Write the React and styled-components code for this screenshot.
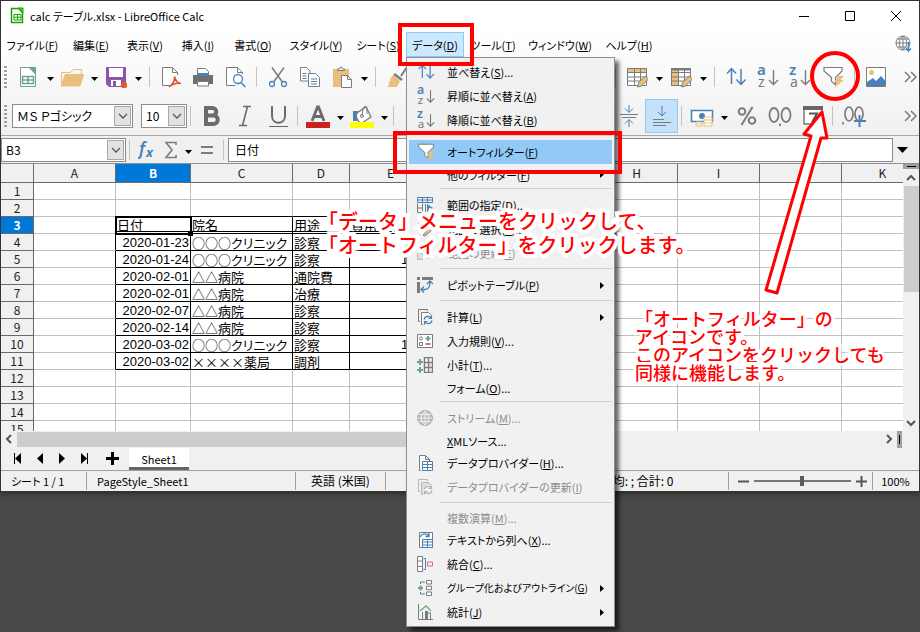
import React, { useState } from "react";
import styled, { createGlobalStyle } from "styled-components";

const GlobalStyle = createGlobalStyle`
  * {
    box-sizing: border-box;
  }
  body {
    margin: 0;
    background: #484847;
    color: #000;
    font-family: "Noto Sans CJK JP", "Noto Sans", sans-serif;
    font-size: 11px;
    line-height: 16px;
    font-feature-settings: "palt";
  }
  button, input, select {
    font: inherit;
    font-feature-settings: inherit;
    color: inherit;
    margin: 0;
    padding: 0;
    border: none;
    background: none;
  }
`;

const Page = styled.div`
  position: relative;
  min-height: 100vh;
  overflow: hidden;
`;

const Window = styled.div`
  display: flex;
  flex-direction: column;
  border: 1px solid #333;
  background: #f0f0f0;
  box-shadow: 0 1px 6px rgba(0, 0, 0, 0.5);
`;

const TitleBar = styled.header`
  display: flex;
  align-items: center;
  height: 31px;
  padding: 0 0 2px 9px;
  gap: 6px;
  background: #fff;
`;

const Title = styled.h1`
  flex: 1;
  margin: 0;
  font-size: 11px;
  font-weight: 400;
`;

const CaptionGroup = styled.div`
  display: flex;
`;

const CaptionButton = styled.button`
  display: flex;
  align-items: center;
  justify-content: center;
  width: 46px;
  height: 29px;
`;

const Chrome = styled.div`
  border-bottom: 1px solid #a8a8ac;
  background: linear-gradient(#fff, #f0f0f0);
`;

const MenuBar = styled.nav`
  display: flex;
  align-items: stretch;
  height: 25px;
`;

const MenuSlot = styled.div`
  position: relative;
  display: flex;
  width: ${(props) => props.$width}px;
`;

const MenuButton = styled.button`
  flex: 1;
  white-space: nowrap;
  border: 1px solid ${(props) => (props.$open ? "#90c8f6" : "transparent")};
  background: ${(props) => (props.$open ? "#cce8ff" : "transparent")};
`;

const UpdateButton = styled.button`
  margin-left: auto;
  padding-right: 7px;
`;

const Dropdown = styled.div`
  position: absolute;
  z-index: 5;
  top: 25px;
  left: 0;
  width: 209px;
  padding: 2px;
  border: 1px solid #8f8f8f;
  background: #f1f1f1;
  box-shadow: 4px 4px 4px rgba(0, 0, 0, 0.6);
`;

const Entry = styled.button`
  display: flex;
  align-items: center;
  width: 100%;
  height: ${(props) => (props.$icon ? 24 : 21)}px;
  padding: 0 8px;
  text-align: left;
  white-space: nowrap;
  font-size: ${(props) => (props.$small ? 10 : 11)}px;
  color: ${(props) => (props.disabled ? "#8d8d8d" : "#000")};
  background: ${(props) => (props.$active ? "#91c9f7" : "transparent")};
`;

const EntryIcon = styled.span`
  display: flex;
  flex: none;
  width: 30px;
`;

const EntryText = styled.span`
  flex: 1;
`;

const Rule = styled.hr`
  height: 1px;
  margin: 3px 0 4px 31px;
  border: none;
  background: #d2d2d2;
`;

const Toolbar = styled.div`
  display: flex;
  align-items: center;
  height: ${(props) => props.$height}px;
`;

const Grip = styled.span`
  width: 3px;
  height: 22px;
  margin: 0 5px 0 3px;
  background: repeating-linear-gradient(#a0a0a0 0 2px, transparent 2px 4px);
`;

const ToolButton = styled.button`
  display: flex;
  flex: none;
  align-items: center;
  justify-content: center;
  width: ${(props) => (props.$wide ? 33 : 32)}px;
  height: 34px;
  border: 1px solid ${(props) => (props.$pressed ? "#90c8f6" : "transparent")};
  background: ${(props) => (props.$pressed ? "#c4e1f9" : "transparent")};
`;

const ArrowButton = styled.button`
  display: flex;
  flex: none;
  align-items: center;
  justify-content: center;
  width: 12px;
  height: 34px;
  padding-top: 4px;
`;

const Divider = styled.span`
  flex: none;
  width: 1px;
  height: 20px;
  margin: 0 ${(props) => (props.$tight ? "4px 0 3px" : "5px")};
  background: #c3c3c3;
`;

const Gap = styled.span`
  flex: none;
  width: ${(props) => props.$width}px;
`;

const MoreButton = styled.button`
  margin-left: auto;
  padding: 0 1px;
  display: flex;
`;

const Combo = styled.label`
  display: flex;
  flex: none;
  align-items: stretch;
  width: ${(props) => props.$width}px;
  height: 24px;
  margin-right: ${(props) => props.$after || 0}px;
  border: 1px solid #8c8c8c;
  background: #fff;
  input {
    flex: 1;
    min-width: 0;
    padding-left: 4px;
    font-size: 12px;
  }
  button {
    display: flex;
    align-items: center;
    justify-content: center;
    width: 17px;
    margin: 1px;
    border: 1px solid #a8a8a8;
    background: #e2e2e2;
  }
`;

const FormulaBar = styled.div`
  display: flex;
  align-items: center;
  height: 27px;
`;

const FormulaButton = styled(ToolButton)`
  width: 26px;
  height: 25px;
`;

const FormulaInput = styled.input`
  flex: 1;
  height: 24px;
  padding-left: 6px;
  font-size: 12px;
  border: 1px solid #8c8c8c;
  background: #fff;
`;

const ExpandButton = styled(FormulaButton)`
  padding-right: 8px;
`;

const SheetArea = styled.div`
  display: flex;
  height: 268px;
  border-top: 1px solid #8f8f8f;
`;

const Viewport = styled.div`
  flex: 1;
  overflow: hidden;
  background: #fff;
`;

const Grid = styled.table`
  table-layout: fixed;
  width: 890px;
  border-collapse: separate;
  border-spacing: 0;
`;

const Col = styled.col`
  width: ${(props) => props.$width}px;
`;

const ColHead = styled.th`
  height: 19px;
  padding: 0;
  font-size: 12px;
  line-height: 16px;
  font-weight: ${(props) => (props.$current ? 700 : 400)};
  color: ${(props) => (props.$current ? "#fff" : "#222")};
  background: ${(props) => (props.$current ? "#0078d7" : "#f0f0f0")};
  border-right: 1px solid #6a6a6a;
  border-bottom: 1px solid #6a6a6a;
`;

const RowHead = styled(ColHead)`
  height: 17px;
`;

const Cell = styled.td`
  position: relative;
  height: 17px;
  padding: 1px 1px 0;
  overflow: ${(props) => (props.$selected ? "visible" : "hidden")};
  white-space: nowrap;
  font-family: ${(props) => (props.$number ? '"Liberation Sans", ' : "")}
    "Noto Sans CJK JP", sans-serif;
  font-size: 13px;
  line-height: ${(props) => (props.$double ? 13 : 15)}px;
  text-align: ${(props) => (props.$number ? "right" : "left")};
  border-right: 1px solid ${(props) => (props.$boxRight ? "#000" : "#c0c0c0")};
  border-bottom: ${(props) =>
    props.$double
      ? "3px double #000"
      : `1px solid ${props.$boxBottom ? "#000" : "#c0c0c0"}`};
  outline: ${(props) => (props.$selected ? "2px solid #000" : "none")};
  outline-offset: -1px;
  z-index: ${(props) => (props.$selected ? 1 : "auto")};
`;

const FillHandle = styled.span`
  position: absolute;
  right: -3px;
  bottom: -5px;
  width: 5px;
  height: 5px;
  background: #000;
`;

const VScroll = styled.div`
  display: flex;
  flex-direction: column;
  align-items: center;
  width: 16px;
  background: #f0f0f0;
`;

const SplitHandle = styled.span`
  flex: none;
  display: flex;
  align-items: center;
  justify-content: center;
  width: ${(props) => (props.$vertical ? 5 : 16)}px;
  height: ${(props) => (props.$vertical ? 17 : 5)}px;
  background: #a0a0a0;
  &::after {
    content: "";
    width: ${(props) => (props.$vertical ? 1 : 9)}px;
    height: ${(props) => (props.$vertical ? 9 : 1)}px;
    background: #000;
  }
`;

const ScrollButton = styled.button`
  display: flex;
  flex: none;
  align-items: center;
  justify-content: center;
  width: 16px;
  height: 17px;
`;

const VThumb = styled.div`
  width: 15px;
  height: 106px;
  margin-bottom: auto;
  background: #cdcdcd;
`;

const HScroll = styled.div`
  display: flex;
  align-items: center;
  height: 16px;
  padding-right: 17px;
`;

const HThumb = styled.div`
  width: 52%;
  height: 15px;
  margin-right: auto;
  background: #cdcdcd;
`;

const TabBar = styled.div`
  display: flex;
  align-items: center;
  height: 23px;
  padding-left: 6px;
`;

const NavButton = styled.button`
  display: flex;
  align-items: center;
  justify-content: center;
  width: 22px;
  height: 22px;
`;

const AddButton = styled(NavButton)`
  width: 34px;
`;

const SheetTab = styled.button`
  width: 60px;
  height: 22px;
  padding-top: 3px;
  background: #fff;
  border-bottom: 3px solid #666;
`;

const StatusBar = styled.footer`
  display: flex;
  align-items: center;
  height: 21px;
  border-top: 1px solid #a0a0a0;
`;

const StatusCell = styled.div`
  flex: ${(props) => (props.$width ? "none" : 1)};
  width: ${(props) => props.$width}px;
  height: 18px;
  padding: 1px ${(props) => (props.$center ? 0 : 10)}px;
  font-size: ${(props) => (props.$large ? 12 : 11)}px;
  text-align: ${(props) => (props.$center ? "center" : "left")};
  white-space: nowrap;
  border-right: 1px solid ${(props) => (props.$last ? "transparent" : "#a0a0a0")};
`;

const ZoomGroup = styled.div`
  display: flex;
  align-items: center;
  width: 144px;
  height: 18px;
  padding: 0 5px 0 9px;
  gap: 5px;
  border-right: 1px solid #a0a0a0;
  button {
    display: flex;
  }
`;

const ZoomSlider = styled.input`
  flex: 1;
  min-width: 0;
  appearance: none;
  height: 12px;
  background: linear-gradient(#777, #777) center / 100% 2px no-repeat;
  &::-webkit-slider-thumb {
    appearance: none;
    width: 4px;
    height: 10px;
    background: #5c5c5c;
  }
`;

const RedBox = styled.div`
  position: absolute;
  z-index: 6;
  left: ${(props) => props.$left}px;
  top: ${(props) => props.$top}px;
  width: ${(props) => props.$width}px;
  height: 43px;
  border: 4px solid #f00;
  pointer-events: none;
`;

const RedArrow = styled.svg`
  position: absolute;
  z-index: 6;
  left: 750px;
  top: 48px;
  pointer-events: none;
`;

const Note = styled.p`
  position: absolute;
  z-index: 7;
  left: ${(props) => props.$left}px;
  top: ${(props) => props.$top}px;
  margin: 0;
  color: #f00;
  font-size: ${(props) => props.$size}px;
  line-height: ${(props) => props.$line}px;
  font-weight: 500;
  font-feature-settings: normal;
  white-space: nowrap;
  -webkit-text-stroke: ${(props) => props.$halo}px #fff;
  paint-order: stroke fill;
  pointer-events: none;
`;

const GRAY = "#7b7b7b";
const BLUE = "#4a80b8";
const SAND = "#e9bf7e";
const GREEN = "#6fa58d";

function Icon({ size = 22, width, height, children, ...rest }) {
  return (
    <svg
      width={width || size}
      height={height || size}
      viewBox={`0 0 ${width || size} ${height || size}`}
      fill="none"
      stroke={GRAY}
      aria-hidden="true"
      {...rest}
    >
      {children}
    </svg>
  );
}

const Triangle = () => (
  <Icon width={7} height={4} stroke="none">
    <path d="M0 0h7L3.500 4z" fill="#000" />
  </Icon>
);

const Chevron = ({ turn = 0, color = "#555", weight = 1.3 }) => (
  <Icon width={10} height={10} stroke={color} strokeWidth={weight}>
    <path d="M1 3l4 4 4-4" transform={`rotate(${turn} 5 5)`} />
  </Icon>
);

const MoreIcon = () => (
  <Icon width={14} height={12} strokeWidth="1.500">
    <path d="M1 1l5 5-5 5M7 1l5 5-5 5" />
  </Icon>
);

const CalcLogo = () => (
  <Icon width={14} height={17} stroke="#18a303">
    <path d="M1.500 1.500h7l4 4v10h-11z" fill="#fff" strokeWidth="1.500" />
    <path d="M8 1h5v5z" fill="#43c330" />
    <path d="M4 7.500h7v5.500H4zM4 10.200h7M7.500 7.500V13" />
  </Icon>
);

const NewIcon = () => (
  <Icon stroke={GREEN}>
    <path d="M3.500 1.500h9l6 6v13h-15z" fill="#fff" />
    <path d="M11 1h8v8z" fill={GREEN} stroke="none" />
    <path d="M5.500 10.500h11v7h-11zM5.500 14h11M11 10.500v7" strokeWidth="1.500" />
  </Icon>
);

const FolderIcon = () => (
  <Icon width={24} stroke={SAND}>
    <path d="M1.500 19V6.500h9l3-3h8V8" fill="#fdf6ea" />
    <path d="M5 8.500h18.500L20 20H1.500z" fill={SAND} />
  </Icon>
);

const SaveIcon = () => (
  <Icon stroke="none">
    <path d="M1 1h20v20H4l-3-3z" fill="#8e56ab" />
    <path d="M4 2h14v9H4z" fill="#fff" />
    <path d="M6 14h10v6H6z" fill="#fff" />
    <path d="M8 15h3v5H8z" fill="#8e56ab" />
    <circle cx="19" cy="19" r="3.200" fill="#e0592f" />
  </Icon>
);

const PdfIcon = () => (
  <Icon>
    <path d="M17.500 9V6.500l-5-5h-10v18h8" fill="#fff" />
    <path d="M12.500 1.500v5h5" />
    <path
      d="M9 21c4-3 6-7 5.500-10.500C16 15 17 17 21 17.500c-5-.8-8 0-12 3.500"
      stroke="#d9552f"
      strokeWidth="1.500"
    />
  </Icon>
);

const PrintIcon = () => (
  <Icon>
    <path d="M5.500 8V2.500h8l3 3V8" fill="#fff" />
    <path d="M1 9h20v9H1z" fill="#6f6f6f" stroke="none" />
    <path d="M5 7h12v3H5z" fill={BLUE} stroke="none" />
    <path d="M5.500 15.500h11v4.500h-11z" fill="#fff" />
  </Icon>
);

const PreviewIcon = () => (
  <Icon>
    <path d="M18.500 8V6.500l-5-5h-11v18h9" fill="#fff" />
    <path d="M13.500 1.500v5h5" />
    <circle cx="14" cy="13" r="4.500" stroke={BLUE} strokeWidth="1.300" />
    <path d="M17 16.500l4.500 4.500" stroke={BLUE} strokeWidth="1.500" />
  </Icon>
);

const CutIcon = () => (
  <Icon>
    <path d="M5 1.500l10 14M17 1.500l-10 14" strokeWidth="1.500" />
    <circle cx="5" cy="18" r="2.500" stroke={BLUE} strokeWidth="1.300" />
    <circle cx="17" cy="18" r="2.500" stroke={BLUE} strokeWidth="1.300" />
  </Icon>
);

const CopyIcon = () => (
  <Icon>
    <path d="M1.500 1.500h6l3.500 3.500v10H1.500z" fill="#fff" />
    <path d="M3.500 7.500h4M3.500 10h4M3.500 12.500h4" stroke={BLUE} />
    <path d="M9.500 7.500h7l4 4v9h-11z" fill="#fff" />
    <path d="M12 13h6M12 15.500h6M12 18h6" stroke={BLUE} />
  </Icon>
);

const PasteIcon = () => (
  <Icon>
    <path d="M2 3h16v18H2z" fill={SAND} stroke="none" />
    <path d="M6.500 4.500V3h2l1-2h1l1 2h2v1.500z" fill="#fff" />
    <path d="M10.500 9.500h6l4 4v8h-10z" fill="#fff" />
    <path d="M16.500 9.500v4h4" />
  </Icon>
);

const BrushIcon = () => (
  <Icon>
    <path d="M21 1l-6 9" strokeWidth="2" />
    <path d="M8 8l8 6" strokeWidth="2.500" />
    <path d="M7 9l7 6-3 6H1l3-3-2-1 3-3-1-1z" fill={SAND} stroke="none" />
  </Icon>
);

const TableIcon = ({ columns }) => (
  <Icon>
    <path d="M1.500 2.500h19v17h-19z" fill="#fff" />
    {columns ? (
      <path d="M1.500 2.500h7v17h-7z" fill={SAND} />
    ) : (
      <path d="M1.500 2.500h19v4h-19z" fill={SAND} />
    )}
    <path d="M1.500 6.500h19M1.500 11h19M1.500 15h19M8.500 2.500v17M14.500 2.500v17" />
    {columns && <path d="M1 2h20v2.500H1z" fill={GRAY} stroke="none" />}
    <path d="M11.500 21l1-4.500 7-6.500 3 3-7 7z" fill={SAND} />
  </Icon>
);

const SortIcon = ({ size = 22 }) => (
  <svg
    width={size}
    height={size}
    viewBox="0 0 22 22"
    fill="none"
    stroke={BLUE}
    strokeWidth="1.500"
    aria-hidden="true"
  >
    <path d="M6.500 18V3M2 7.500l4.500-5 4.500 5" />
    <path d="M16 3v15M11.500 13.500l4.500 5 4.500-5" />
  </svg>
);

const LetterSortIcon = ({ top, bottom, size = 22 }) => (
  <svg width={size} height={size} viewBox="0 0 22 22" aria-hidden="true">
    <text x="0" y="9" fontFamily="Noto Sans" fontSize="15" fontWeight="600" fill={BLUE}>
      {top}
    </text>
    <text x="1" y="21" fontFamily="Noto Sans" fontSize="14" fill={GRAY}>
      {bottom}
    </text>
    <path
      d="M16.500 4v14.500M12 14l4.500 4.500 4.500-4.500"
      fill="none"
      stroke={GRAY}
      strokeWidth="1.400"
    />
  </svg>
);

const FilterIcon = ({ size = 22 }) => (
  <svg width={size} height={size} viewBox="0 0 22 22" aria-hidden="true">
    <path
      d="M2 1.500h18v3.500l-6.500 6.500v7l-4-3v-4L2 5z"
      fill="#fff"
      stroke={GRAY}
      strokeWidth="1.200"
    />
    <path d="M17 10h5l-3.500 4H22l-10 8 3-6h-3z" fill={SAND} />
  </svg>
);

const ImageIcon = () => (
  <Icon>
    <path d="M1.500 1.500h19v19h-19z" fill="#fff" />
    <circle cx="6.500" cy="6.500" r="2.500" fill={SAND} stroke="none" />
    <path d="M2 20v-4l6-4 3 3 5-5 4.500 5v5z" fill={BLUE} stroke="none" />
  </Icon>
);

const BoldIcon = () => (
  <Icon strokeWidth="4" stroke="#6b6b6b">
    <path d="M5 3h6.500a3.700 3.700 0 010 7.500H5zM5 10.500h7.500a4.200 4.200 0 010 8.500H5z" />
  </Icon>
);

const ItalicIcon = () => (
  <Icon strokeWidth="1.600" stroke="#6b6b6b">
    <path d="M9 1.500h8M5 20.500h8M13.500 1.500l-5 19" />
  </Icon>
);

const UnderlineIcon = () => (
  <Icon stroke="#6b6b6b">
    <path d="M5 1v10c0 9 13 9 13 0V1" strokeWidth="2" />
    <path d="M2 21.500h19" />
  </Icon>
);

const FontColorIcon = () => (
  <Icon width={24} height={24} stroke="#6b6b6b">
    <path d="M6 17l5.500-14h1L18 17M8 12.500h8" strokeWidth="2.800" />
    <path d="M0 18h24v6H0z" fill="#c9211e" stroke="none" />
  </Icon>
);

const FillColorIcon = () => (
  <Icon width={24} height={24}>
    <path d="M3 7h6l-2 4v6H3z" fill={BLUE} stroke="none" />
    <path d="M7 9l9-6 5 10-9 6c-3 1-7-6-5-10z" fill="#fff" strokeWidth="1.300" />
    <path d="M12 12l1-7c1-4 4-3 4 0v5" />
    <circle cx="12" cy="12" r="1.500" />
    <path d="M0 18h24v6H0z" fill="#ff0" stroke="none" />
  </Icon>
);

const AlignMiddleIcon = () => (
  <Icon>
    <path d="M2 9.500h18M4 12.500h14" />
    <path d="M11 0v7M7 3.500l4 4 4-4M11 22v-7M7 18.500l4-4 4 4" stroke={BLUE} />
  </Icon>
);

const AlignBottomIcon = () => (
  <Icon>
    <path d="M11 1v10M7 7l4 4 4-4" stroke={BLUE} />
    <path d="M2 14.500h11M2 17.500h18M2 20.500h13" strokeWidth="1.200" />
  </Icon>
);

const CurrencyIcon = () => (
  <Icon width={24}>
    <path d="M1.500 5.500h21v11h-21z" fill="#fff" stroke={BLUE} strokeWidth="1.500" />
    <circle cx="12" cy="11" r="3" fill={BLUE} stroke="none" />
    <g fill="#fff" stroke={SAND}>
      <path d="M6 17h6v4H6zM6 19h6M14 12h8v9h-8zM14 15h8M14 18h8" />
    </g>
  </Icon>
);

const PercentIcon = () => (
  <Icon strokeWidth="2">
    <circle cx="6" cy="6.500" r="3.300" />
    <circle cx="16" cy="15.500" r="3.300" />
    <path d="M16.500 2l-11 18" />
  </Icon>
);

const DecimalIcon = () => (
  <Icon width={24} strokeWidth="1.800">
    <ellipse cx="6" cy="10" rx="4.500" ry="7" />
    <ellipse cx="18" cy="10" rx="4.500" ry="7" />
    <path d="M12 18.500v2.500" />
  </Icon>
);

const DateIcon = () => (
  <Icon>
    <path d="M2 2h18v17H2z" fill="#fff" strokeWidth="1.500" />
    <path d="M1 1h20v4H1z" fill="#666" stroke="none" />
    <path d="M7 8.500h8l-5 9" stroke="#555" strokeWidth="2" />
  </Icon>
);

const AddDecimalIcon = () => (
  <Icon width={24} strokeWidth="1.700">
    <ellipse cx="7" cy="9" rx="4" ry="7" />
    <ellipse cx="17" cy="9" rx="4" ry="7" />
    <path d="M1 17v2.500" />
    <path d="M17.500 10v12M12 16h12" stroke={BLUE} strokeWidth="2" />
  </Icon>
);

const UpdateIcon = () => (
  <Icon size={17}>
    <circle cx="8" cy="8" r="7" />
    <path d="M1 8h14M2.500 4h11M2.500 12h9M8 1v14M8 1c-5 4-5 10 0 14M8 1c5 4 5 10 0 14" />
    <path d="M13.500 7v9M11 13.500l2.500 2.500 2.500-2.500" stroke={BLUE} strokeWidth="1.500" />
  </Icon>
);

const FxIcon = () => (
  <Icon width={18} height={20} stroke="none" fill={BLUE}>
    <text x="1" y="15" fontFamily="Noto Sans" fontStyle="italic" fontWeight="600" fontSize="17">
      f
    </text>
    <text x="8" y="17" fontFamily="Noto Sans" fontStyle="italic" fontWeight="700" fontSize="13">
      x
    </text>
  </Icon>
);

const SigmaIcon = () => (
  <Icon width={14} height={18} strokeWidth="1.600">
    <path d="M12 4V1.500H2L8 9l-6 7.500h10V14" />
  </Icon>
);

const EqualIcon = () => (
  <Icon width={14} height={10} strokeWidth="2">
    <path d="M1 2h12M1 8h12" />
  </Icon>
);

/* 16px icons of the data menu */
const RangeIcon = () => (
  <Icon size={16}>
    <path d="M.5 6.500v9h5v-9M.5 11h5" />
    <path d="M.5.5h15v5H.5zM5.500.5v5M10.500.5v5M.5 3h15" stroke={BLUE} />
    <path d="M10 7l6 4-6 4z" fill={BLUE} stroke="none" />
    <path d="M8.500 7v9" />
  </Icon>
);

const SelectRangeIcon = () => (
  <Icon size={16}>
    <path d="M1 2h4v3H1z" fill={SAND} stroke="none" />
    <path d="M6 14l8-8 2 2-8 7z" fill={SAND} />
  </Icon>
);

const RefreshRangeIcon = () => (
  <Icon size={16} stroke="#bbb">
    <path d="M.5.500h9v4h-9zM.5 8.500h5v6h-5z" fill="#ddd" />
    <circle cx="11" cy="10" r="3.500" />
  </Icon>
);

const PivotIcon = () => (
  <Icon size={16}>
    <path d="M0 0h3v3H0zM5 0h11v3H5zM0 5h3v11H0z" fill={GRAY} stroke="none" />
    <path
      d="M4 12.500h4c4 0 5-3 5-8M7 9.500l-3 3 3 3M10 7l3-3 3 3"
      stroke={BLUE}
      strokeWidth="1.300"
    />
  </Icon>
);

const RecalcIcon = ({ muted }) => (
  <Icon size={16} stroke={muted ? "#b4b4b4" : GRAY}>
    <path d="M3 12.500H1.500V.5h9V2" />
    <path d="M6 15.500H4.500v-12h7l3 3" fill={muted ? "#dcdcdc" : "#fff"} />
    <circle cx="11" cy="11" r="5" fill="#f1f1f1" stroke="none" />
    <path
      d="M7 10.500c1-4 6-4 7.500-1M14.500 6.500v3h-3M15 11.500c-1 4-6 4-7.500 1M7.500 15.500v-3h3"
      stroke={muted ? "#b4b4b4" : BLUE}
      strokeWidth="1.200"
    />
  </Icon>
);

const ValidityIcon = () => (
  <Icon size={16}>
    <path d="M.5 1.500h15v13H.5z" fill="#fff" />
    <circle cx="4" cy="5.500" r="1.500" />
    <path d="M2.500 9.500h3v3h-3z" />
    <path d="M11 3v5M8.500 5.500h5" stroke={GREEN} strokeWidth="2" />
    <path d="M8.500 11h5" stroke="#db6b80" strokeWidth="2" />
  </Icon>
);

const SubtotalIcon = () => (
  <Icon size={16}>
    <path
      d="M7.500.5h8v15h-8zM7.500 5.500h8M7.500 10.500h8M11.500.5v15"
      fill="#fff"
      strokeWidth="1.500"
    />
    <path d="M3 2v6M0 5h6M3 10v6M0 13h6" stroke={GREEN} strokeWidth="2" />
    <path d="M13 8h1M13 13h1" stroke="#db6b80" />
  </Icon>
);

const GlobeIcon = () => (
  <Icon size={16} stroke="#f1f1f1">
    <circle cx="8" cy="8" r="7.500" fill="#b9b9b9" stroke="#b0b0b0" />
    <path d="M1 8h14M2 4.500h12M2 11.500h12M8 1v14M8 1c-5 4-5 10 0 14M8 1c5 4 5 10 0 14" />
  </Icon>
);

const ProviderIcon = () => (
  <Icon size={16}>
    <path d="M4 15.500H2.500V.5h6l4 4V6M8.500.5v4h4" fill="#fff" />
    <path
      d="M5.500 6.500h10v9h-10zM5.500 9.500h10M5.500 12.500h10M10.500 6.500v9"
      stroke={BLUE}
      fill="#fff"
    />
  </Icon>
);

const TextToColumnsIcon = () => (
  <Icon size={16}>
    <path d="M2.500.5h13v15h-13z" fill="#fff" />
    <path d="M3 5c2-4 6-4 9-1M12 1v3.500H8.500" stroke={BLUE} strokeWidth="1.300" />
    <path d="M5.500 7.500h10v8h-10zM5.500 10h10M5.500 13h10M10.500 7.500v8" stroke={BLUE} />
  </Icon>
);

const ConsolidateIcon = () => (
  <Icon size={16}>
    <path d="M.5.5h5v15h-5zM.5 5h5M.5 10.500h5" fill="#fff" />
    <path d="M6.500 2.500h2v11h-2" stroke={BLUE} />
    <path d="M10.500 6h5v4h-5z" stroke="#db6b80" />
  </Icon>
);

const GroupIcon = () => (
  <Icon size={16}>
    <path d="M9.500.5h5v3.500h-5zM9.500 6.200h5v3.500h-5zM9.500 12h5v3.500h-5z" fill="#fff" />
    <path d="M8 2H3.500v2M3.500 12v2H8" stroke={BLUE} />
    <path d="M3.500 5.500v5M1 8h5" stroke={GREEN} strokeWidth="2" />
  </Icon>
);

const StatsIcon = () => (
  <Icon size={16}>
    <path d="M1.500 0v15.500H16M5.500 15V8M13.500 15V9h-3" />
    <path d="M8 7h3v8H8z" fill={GRAY} stroke="none" />
    <path d="M3 7l6-5 5 5" stroke={GREEN} strokeWidth="1.300" />
  </Icon>
);

const MENUS = [
  { label: "ファイル", hotkey: "F", width: 63 },
  { label: "編集", hotkey: "E", width: 54 },
  { label: "表示", hotkey: "V", width: 54 },
  { label: "挿入", hotkey: "I", width: 52 },
  { label: "書式", hotkey: "O", width: 58 },
  { label: "スタイル", hotkey: "Y", width: 68 },
  { label: "シート", hotkey: "S", width: 56 },
  { label: "データ", hotkey: "D", width: 58 },
  { label: "ツール", hotkey: "T", width: 58 },
  { label: "ウィンドウ", hotkey: "W", width: 76 },
  { label: "ヘルプ", hotkey: "H", width: 62 },
];

const DATA_MENU = [
  [
    { label: "並べ替え", hotkey: "S", more: true, icon: <SortIcon size={18} /> },
    { label: "昇順に並べ替え", hotkey: "A", icon: <LetterSortIcon top="a" bottom="z" size={18} /> },
    { label: "降順に並べ替え", hotkey: "B", icon: <LetterSortIcon top="z" bottom="a" size={18} /> },
  ],
  [
    { label: "オートフィルター", hotkey: "F", icon: <FilterIcon size={18} />, active: true },
    { label: "他のフィルター", hotkey: "F", submenu: true },
  ],
  [
    { label: "範囲の指定", hotkey: "D", more: true, icon: <RangeIcon /> },
    { label: "範囲の選択", hotkey: "E", more: true, icon: <SelectRangeIcon /> },
    { label: "範囲の更新", hotkey: "E", icon: <RefreshRangeIcon />, disabled: true },
  ],
  [{ label: "ピボットテーブル", hotkey: "P", icon: <PivotIcon />, submenu: true }],
  [
    { label: "計算", hotkey: "L", icon: <RecalcIcon />, submenu: true },
    { label: "入力規則", hotkey: "V", more: true, icon: <ValidityIcon /> },
    { label: "小計", hotkey: "T", more: true, icon: <SubtotalIcon /> },
    { label: "フォーム", hotkey: "O", more: true },
  ],
  [
    { label: "ストリーム", hotkey: "M", more: true, icon: <GlobeIcon />, disabled: true },
    { prefix: "X", label: "MLソース..." },
    { label: "データプロバイダー", hotkey: "H", more: true, icon: <ProviderIcon /> },
    { label: "データプロバイダーの更新", hotkey: "I", icon: <RecalcIcon muted />, disabled: true },
  ],
  [
    { label: "複数演算", hotkey: "M", more: true, disabled: true },
    { label: "テキストから列へ", hotkey: "X", more: true, icon: <TextToColumnsIcon /> },
    { label: "統合", hotkey: "C", more: true, icon: <ConsolidateIcon /> },
    {
      label: "グループ化およびアウトライン",
      hotkey: "G",
      icon: <GroupIcon />,
      submenu: true,
      small: true,
    },
    { label: "統計", hotkey: "J", icon: <StatsIcon />, submenu: true },
  ],
];

const COLUMNS = [
  ["A", 82],
  ["B", 75],
  ["C", 102],
  ["D", 57],
  ["E", 82],
  ["F", 82],
  ["G", 82],
  ["H", 82],
  ["I", 82],
  ["J", 82],
  ["K", 82],
];

const ROWS = {
  3: { B: "日付", C: "院名", D: "用途", E: "費用" },
  4: { B: "2020-01-23", C: "○○○クリニック", D: "診察" },
  5: { B: "2020-01-24", C: "○○○クリニック", D: "診察", E: "1500" },
  6: { B: "2020-02-01", C: "△△病院", D: "通院費" },
  7: { B: "2020-02-01", C: "△△病院", D: "治療" },
  8: { B: "2020-02-07", C: "△△病院", D: "診察" },
  9: { B: "2020-02-14", C: "△△病院", D: "診察" },
  10: { B: "2020-03-02", C: "○○○クリニック", D: "診察", E: "1500" },
  11: { B: "2020-03-02", C: "××××薬局", D: "調剤" },
};

function Hotkey({ prefix, label, hotkey, more }) {
  return (
    <>
      {prefix && <u>{prefix}</u>}
      {label}
      {hotkey && (
        <>
          (<u>{hotkey}</u>)
        </>
      )}
      {more && "..."}
    </>
  );
}

function DataMenu() {
  return (
    <Dropdown role="menu">
      {DATA_MENU.map((section, i) => (
        <React.Fragment key={i}>
          {i > 0 && <Rule />}
          {section.map((item) => (
            <Entry
              key={item.label}
              role="menuitem"
              disabled={item.disabled}
              $icon={!!item.icon}
              $active={item.active}
              $small={item.small}
            >
              <EntryIcon>{item.icon}</EntryIcon>
              <EntryText>
                <Hotkey {...item} />
              </EntryText>
              {item.submenu && (
                <Icon width={4} height={7} stroke="none">
                  <path d="M0 0l4 3.500L0 7z" fill="#000" />
                </Icon>
              )}
            </Entry>
          ))}
        </React.Fragment>
      ))}
    </Dropdown>
  );
}

function Tool({ label, icon, split, wide, pressed }) {
  return (
    <>
      <ToolButton aria-label={label} aria-pressed={pressed} $wide={wide} $pressed={pressed}>
        {icon}
      </ToolButton>
      {split && (
        <ArrowButton aria-label={`${label} オプション`}>
          <Triangle />
        </ArrowButton>
      )}
    </>
  );
}

function ComboBox({ label, value, onChange, width, after }) {
  return (
    <Combo $width={width} $after={after}>
      <input aria-label={label} value={value} onChange={(e) => onChange(e.target.value)} />
      <button aria-label={`${label} 一覧`}>
        <Chevron />
      </button>
    </Combo>
  );
}

function Sheet() {
  const rows = Array.from({ length: 15 }, (_, i) => i + 1);
  return (
    <Viewport>
      <Grid>
        <colgroup>
          <Col $width={33} />
          {COLUMNS.map(([name, width]) => (
            <Col key={name} $width={width} />
          ))}
        </colgroup>
        <thead>
          <tr>
            <ColHead />
            {COLUMNS.map(([name]) => (
              <ColHead key={name} scope="col" $current={name === "B"}>
                {name}
              </ColHead>
            ))}
          </tr>
        </thead>
        <tbody>
          {rows.map((row) => (
            <tr key={row}>
              <RowHead scope="row" $current={row === 3}>
                {row}
              </RowHead>
              {COLUMNS.map(([name]) => {
                const boxed = "BCDEF".includes(name);
                const inRows = row >= 3 && row <= 11;
                const selected = row === 3 && name === "B";
                return (
                  <Cell
                    key={name}
                    $number={row > 3 && (name === "B" || name === "E")}
                    $boxRight={inRows && (boxed || name === "A")}
                    $boxBottom={boxed && row >= 2 && row <= 11}
                    $double={boxed && row === 3}
                    $selected={selected}
                  >
                    {ROWS[row]?.[name]}
                    {selected && <FillHandle />}
                  </Cell>
                );
              })}
            </tr>
          ))}
        </tbody>
      </Grid>
    </Viewport>
  );
}

export default function App() {
  const [openMenu, setOpenMenu] = useState("データ");
  const [font, setFont] = useState("ＭＳ Ｐゴシック");
  const [fontSize, setFontSize] = useState("10");
  const [cellName, setCellName] = useState("B3");
  const [formula, setFormula] = useState("日付");
  const [zoom, setZoom] = useState(49);

  return (
    <Page>
      <GlobalStyle />
      <Window>
        <TitleBar>
          <CalcLogo />
          <Title>calc テーブル.xlsx - LibreOffice Calc</Title>
          <CaptionGroup>
            <CaptionButton aria-label="最小化">
              <Icon width={10} height={10} stroke="#000">
                <path d="M0 5.500h10" />
              </Icon>
            </CaptionButton>
            <CaptionButton aria-label="最大化">
              <Icon width={10} height={10} stroke="#000">
                <path d="M.5.5h9v9h-9z" />
              </Icon>
            </CaptionButton>
            <CaptionButton aria-label="閉じる">
              <Icon width={10} height={10} stroke="#000">
                <path d="M0 0l10 10M10 0L0 10" />
              </Icon>
            </CaptionButton>
          </CaptionGroup>
        </TitleBar>

        <Chrome>
          <MenuBar>
            {MENUS.map((menu) => (
              <MenuSlot key={menu.label} $width={menu.width}>
                <MenuButton
                  $open={menu.label === openMenu}
                  onClick={() => setOpenMenu(menu.label === openMenu ? "" : menu.label)}
                >
                  <Hotkey {...menu} />
                </MenuButton>
                {menu.label === "データ" && openMenu === "データ" && <DataMenu />}
              </MenuSlot>
            ))}
            <UpdateButton aria-label="更新">
              <UpdateIcon />
            </UpdateButton>
          </MenuBar>

          <Toolbar $height={40}>
            <Grip />
            <Tool label="新規" icon={<NewIcon />} split />
            <Tool label="開く" icon={<FolderIcon />} split />
            <Tool label="保存" icon={<SaveIcon />} split />
            <Divider />
            <Tool label="PDF" icon={<PdfIcon />} />
            <Tool label="印刷" icon={<PrintIcon />} />
            <Tool label="印刷プレビュー" icon={<PreviewIcon />} />
            <Divider />
            <Tool label="切り取り" icon={<CutIcon />} />
            <Tool label="コピー" icon={<CopyIcon />} />
            <Tool label="貼り付け" icon={<PasteIcon />} split />
            <Divider />
            <Tool label="書式のコピー" icon={<BrushIcon />} />
            <Gap $width={197} />
            <Divider />
            <Tool label="行" icon={<TableIcon />} split />
            <Tool label="列" icon={<TableIcon columns />} split />
            <Divider />
            <Tool label="並べ替え" icon={<SortIcon />} />
            <Tool label="昇順" icon={<LetterSortIcon top="a" bottom="z" />} />
            <Tool label="降順" icon={<LetterSortIcon top="z" bottom="a" />} />
            <Tool label="オートフィルター" icon={<FilterIcon />} wide />
            <Divider />
            <Tool label="画像" icon={<ImageIcon />} />
            <MoreButton aria-label="その他">
              <MoreIcon />
            </MoreButton>
          </Toolbar>

          <Toolbar $height={38}>
            <Grip />
            <ComboBox label="フォント名" value={font} onChange={setFont} width={121} after={8} />
            <ComboBox label="フォントサイズ" value={fontSize} onChange={setFontSize} width={46} />
            <Divider $tight />
            <Tool label="太字" icon={<BoldIcon />} wide />
            <Tool label="斜体" icon={<ItalicIcon />} wide />
            <Tool label="下線" icon={<UnderlineIcon />} wide />
            <Divider $tight />
            <Tool label="文字色" icon={<FontColorIcon />} split />
            <Tool label="背景色" icon={<FillColorIcon />} split />
            <Divider $tight />
            <Gap $width={215} />
            <Tool label="中央揃え" icon={<AlignMiddleIcon />} />
            <Tool label="下揃え" icon={<AlignBottomIcon />} wide pressed />
            <Divider $tight />
            <Tool label="通貨" icon={<CurrencyIcon />} split />
            <Tool label="パーセント" icon={<PercentIcon />} wide />
            <Tool label="数値" icon={<DecimalIcon />} wide />
            <Tool label="日付" icon={<DateIcon />} wide />
            <Divider $tight />
            <Tool label="小数点以下の桁数を増やす" icon={<AddDecimalIcon />} wide />
            <MoreButton aria-label="その他">
              <MoreIcon />
            </MoreButton>
          </Toolbar>
        </Chrome>

        <FormulaBar>
          <ComboBox label="名前ボックス" value={cellName} onChange={setCellName} width={125} />
          <Divider $tight />
          <FormulaButton aria-label="関数ウィザード">
            <FxIcon />
          </FormulaButton>
          <NavButton aria-label="合計">
            <SigmaIcon />
          </NavButton>
          <ArrowButton aria-label="関数">
            <Triangle />
          </ArrowButton>
          <FormulaButton aria-label="数式">
            <EqualIcon />
          </FormulaButton>
          <Divider $tight />
          <FormulaInput
            aria-label="数式入力"
            value={formula}
            onChange={(e) => setFormula(e.target.value)}
          />
          <ExpandButton aria-label="展開">
            <Icon width={11} height={6} stroke="none">
              <path d="M0 0h11L5.500 6z" fill="#000" />
            </Icon>
          </ExpandButton>
        </FormulaBar>

        <SheetArea>
          <Sheet />
          <VScroll>
            <SplitHandle />
            <ScrollButton aria-label="上へ">
              <Chevron turn={180} weight={2} />
            </ScrollButton>
            <VThumb />
            <ScrollButton aria-label="下へ">
              <Chevron weight={2} />
            </ScrollButton>
          </VScroll>
        </SheetArea>

        <HScroll>
          <ScrollButton aria-label="左へ">
            <Chevron turn={90} weight={2} />
          </ScrollButton>
          <HThumb />
          <ScrollButton aria-label="右へ">
            <Chevron turn={-90} weight={2} />
          </ScrollButton>
          <SplitHandle $vertical />
        </HScroll>

        <TabBar>
          <NavButton aria-label="最初のシート">
            <Icon width={8} height={11} stroke="none" fill="#000">
              <path d="M0 0h1v11H0zM7 0v11L1 5.500z" />
            </Icon>
          </NavButton>
          <NavButton aria-label="前のシート">
            <Icon width={6} height={11} stroke="none" fill="#000">
              <path d="M6 0v11L0 5.500z" />
            </Icon>
          </NavButton>
          <NavButton aria-label="次のシート">
            <Icon width={6} height={11} stroke="none" fill="#000">
              <path d="M0 0v11l6-5.500z" />
            </Icon>
          </NavButton>
          <NavButton aria-label="最後のシート">
            <Icon width={8} height={11} stroke="none" fill="#000">
              <path d="M7 0h1v11H7zM1 0v11l6-5.500z" />
            </Icon>
          </NavButton>
          <AddButton aria-label="シートの追加">
            <Icon width={13} height={13} stroke="#000" strokeWidth="3">
              <path d="M6.500 0v13M0 6.500h13" />
            </Icon>
          </AddButton>
          <SheetTab>Sheet1</SheetTab>
        </TabBar>

        <StatusBar>
          <StatusCell $width={86}>シート 1 / 1</StatusCell>
          <StatusCell $width={209}>PageStyle_Sheet1</StatusCell>
          <StatusCell $width={90} $center $large>
            英語 (米国)
          </StatusCell>
          <StatusCell $width={160} />
          <StatusCell $center $large>
            平均: ; 合計: 0
          </StatusCell>
          <ZoomGroup>
            <button aria-label="縮小">
              <Icon width={11} height={11} stroke="#555" strokeWidth="2">
                <path d="M0 5.500h11" />
              </Icon>
            </button>
            <ZoomSlider
              type="range"
              aria-label="ズーム"
              value={zoom}
              onChange={(e) => setZoom(Number(e.target.value))}
            />
            <button aria-label="拡大">
              <Icon width={11} height={11} stroke="#555" strokeWidth="2">
                <path d="M0 5.500h11M5.500 0v11" />
              </Icon>
            </button>
          </ZoomGroup>
          <StatusCell $width={46} $center $last>
            100%
          </StatusCell>
        </StatusBar>
      </Window>

      <RedBox $left={398} $top={23} $width={76} />
      <RedBox $left={393} $top={131} $width={229} />
      <RedArrow width="120" height="260" fill="none" stroke="#f00" strokeWidth="4">
        <circle cx="85" cy="28" r="23" />
        <path
          d="M72 64L54 86l7 2L16 242l11 3L71 90l6 0z"
          fill="#fff"
          strokeWidth="3"
          strokeLinejoin="round"
        />
      </RedArrow>
      <Note $left={318} $top={209} $size={20} $line={24} $halo={8}>
        「データ」メニューをクリックして、
        <br />
        「オートフィルター」をクリックします。
      </Note>
      <Note $left={635} $top={309} $size={18} $line={18} $halo={6}>
        「オートフィルター」の
        <br />
        アイコンです。
        <br />
        このアイコンをクリックしても
        <br />
        同様に機能します。
      </Note>
    </Page>
  );
}
